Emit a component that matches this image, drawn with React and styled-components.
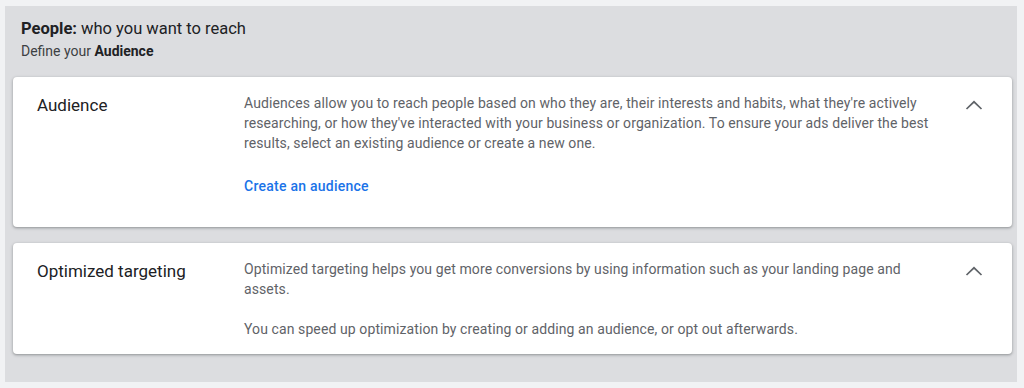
import React from "react";
import styled, { createGlobalStyle } from "styled-components";

const Global = createGlobalStyle`
  html, body { margin: 0; padding: 0; background: #f1f2f4; }
  body { font-family: Roboto, "Liberation Sans", Arial, sans-serif; -webkit-font-smoothing: antialiased; }
  * { box-sizing: border-box; }
`;

const Page = styled.div`
  padding: 6px 7px 6px 5px;
`;

const Panel = styled.section`
  background: #dcdde0;
  padding: 11px 5px 28px 8px;
`;

const Header = styled.header`
  padding-left: 8px;
  margin-bottom: 16px;
`;

const Title = styled.h2`
  margin: 0;
  font-size: 16.5px;
  line-height: 24px;
  font-weight: 400;
  color: #202124;
  b { font-weight: 700; }
`;

const Subtitle = styled.div`
  font-size: 14px;
  line-height: 20px;
  color: #3c4043;
  b { font-weight: 700; color: #202124; }
`;

const Stack = styled.div`
  display: flex;
  flex-direction: column;
  gap: 16px;
`;

const Card = styled.div`
  background: #fff;
  border-radius: 4px;
  box-shadow: 0 1px 2px rgba(60, 64, 67, 0.3), 0 1px 3px 1px rgba(60, 64, 67, 0.15);
  display: grid;
  grid-template-columns: 207px 1fr 24px;
  align-items: start;
  padding: 16px 25px ${(p) => p.$pb}px 24px;
`;

const Label = styled.div`
  font-size: 17px;
  line-height: 24px;
  color: #202124;
`;

const Body = styled.div`
  font-size: 14px;
  line-height: 20px;
  color: #5f6368;
  letter-spacing: 0.1px;
  padding-right: 22px;
`;

const Para = styled.p`
  margin: 0;
  & + & { margin-top: 20px; }
`;

const LinkText = styled.a`
  display: block;
  margin-top: 23px;
  color: #1a73e8;
  font-weight: 500;
  font-size: 14px;
  line-height: 20px;
  letter-spacing: 0.25px;
  text-decoration: none;
  cursor: pointer;
`;

const Toggle = styled.button`
  width: 24px;
  height: 24px;
  padding: 0;
  border: 0;
  background: none;
  color: #5f6368;
  display: flex;
  align-items: center;
  justify-content: center;
  margin-left: -1px;
`;

const ChevronUp = () => (
  <svg width="24" height="24" viewBox="0 0 24 24" fill="none" stroke="currentColor" strokeWidth="1.7" aria-hidden="true">
    <path d="M4.5 16L12 8.8l7.5 7.2" />
  </svg>
);

export default function App() {
  return (
    <>
      <Global />
      <Page>
        <Panel>
          <Header>
            <Title>
              <b>People:</b> who you want to reach
            </Title>
            <Subtitle>
              Define your <b>Audience</b>
            </Subtitle>
          </Header>
          <Stack>
            <Card $pb={31}>
              <Label>Audience</Label>
              <Body>
                <Para>
                  Audiences allow you to reach people based on who they are, their interests and habits, what
                  they're actively researching, or how they've interacted with your business or organization. To
                  ensure your ads deliver the best results, select an existing audience or create a new one.
                </Para>
                <LinkText>Create an audience</LinkText>
              </Body>
              <Toggle aria-label="Collapse">
                <ChevronUp />
              </Toggle>
            </Card>
            <Card $pb={15}>
              <Label>Optimized targeting</Label>
              <Body>
                <Para>
                  Optimized targeting helps you get more conversions by using information such as your landing
                  page and assets.
                </Para>
                <Para>You can speed up optimization by creating or adding an audience, or opt out afterwards.</Para>
              </Body>
              <Toggle aria-label="Collapse">
                <ChevronUp />
              </Toggle>
            </Card>
          </Stack>
        </Panel>
      </Page>
    </>
  );
}
